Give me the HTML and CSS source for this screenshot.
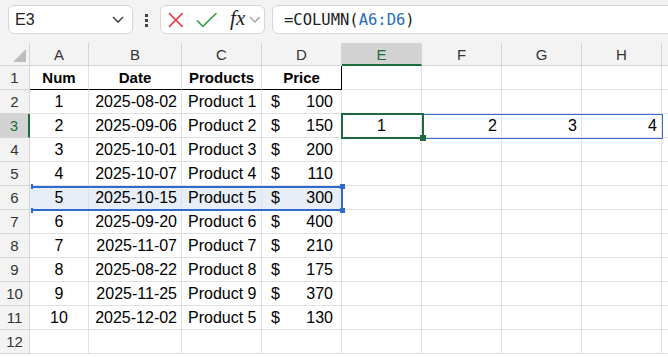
FILE: index.html
```html
<!DOCTYPE html>
<html lang="en">
<head>
    <meta charset="UTF-8">
    <title>Sheet</title>
    <link rel="stylesheet" href="styles.css">
</head>
<body>
    <!-- Formula bar -->
    <div class="toolbar">
        <div class="namebox">
            <span>E3</span>
            <svg class="chev" width="12" height="7" viewBox="0 0 12 7"><path d="M1 1l5 5 5-5" fill="none" stroke="#333" stroke-width="1.3"/></svg>
        </div>
        <div class="dots"><i></i><i></i><i></i></div>
        <div class="fxbox">
            <svg width="16" height="16" viewBox="0 0 16 16"><path d="M1 1l14 14M15 1L1 15" stroke="#e5484a" stroke-width="1.7" fill="none"/></svg>
            <svg class="check" width="22" height="16" viewBox="0 0 22 16"><path d="M1 8.5l6 6L21 1" stroke="#38a148" stroke-width="1.7" fill="none"/></svg>
            <span class="fx">fx</span>
            <svg width="12" height="7" viewBox="0 0 12 7"><path d="M1 1l5 5 5-5" fill="none" stroke="#9a9a9a" stroke-width="1.3"/></svg>
        </div>
        <div class="formula">=COLUMN(<span class="ref">A6:D6</span>)</div>
    </div>

    <!-- Grid -->
    <div class="sheet">
        <div class="row head">
            <div class="corner"></div>
            <div class="ch">A</div><div class="ch">B</div><div class="ch">C</div><div class="ch">D</div>
            <div class="ch cur">E</div><div class="ch">F</div><div class="ch">G</div><div class="ch">H</div><div class="ch"></div>
        </div>
        <div class="row">
            <div class="rh">1</div>
            <div class="c th">Num</div><div class="c th">Date</div><div class="c th">Products</div><div class="c th last">Price</div>
            <div class="c"></div><div class="c"></div><div class="c"></div><div class="c"></div><div class="c"></div>
        </div>
        <div class="row">
            <div class="rh">2</div>
            <div class="c ctr">1</div><div class="c rt">2025-08-02</div><div class="c lt">Product 1</div><div class="c acc"><span>$</span><span>100</span></div>
            <div class="c"></div><div class="c"></div><div class="c"></div><div class="c"></div><div class="c"></div>
        </div>
        <div class="row">
            <div class="rh cur">3</div>
            <div class="c ctr">2</div><div class="c rt">2025-09-06</div><div class="c lt">Product 2</div><div class="c acc"><span>$</span><span>150</span></div>
            <div class="c ctr">1</div><div class="c rt">2</div><div class="c rt">3</div><div class="c rt">4</div><div class="c"></div>
        </div>
        <div class="row">
            <div class="rh">4</div>
            <div class="c ctr">3</div><div class="c rt">2025-10-01</div><div class="c lt">Product 3</div><div class="c acc"><span>$</span><span>200</span></div>
            <div class="c"></div><div class="c"></div><div class="c"></div><div class="c"></div><div class="c"></div>
        </div>
        <div class="row">
            <div class="rh">5</div>
            <div class="c ctr">4</div><div class="c rt">2025-10-07</div><div class="c lt">Product 4</div><div class="c acc"><span>$</span><span>110</span></div>
            <div class="c"></div><div class="c"></div><div class="c"></div><div class="c"></div><div class="c"></div>
        </div>
        <div class="row picked">
            <div class="rh">6</div>
            <div class="c ctr">5</div><div class="c rt">2025-10-15</div><div class="c lt">Product 5</div><div class="c acc"><span>$</span><span>300</span></div>
            <div class="c"></div><div class="c"></div><div class="c"></div><div class="c"></div><div class="c"></div>
        </div>
        <div class="row">
            <div class="rh">7</div>
            <div class="c ctr">6</div><div class="c rt">2025-09-20</div><div class="c lt">Product 6</div><div class="c acc"><span>$</span><span>400</span></div>
            <div class="c"></div><div class="c"></div><div class="c"></div><div class="c"></div><div class="c"></div>
        </div>
        <div class="row">
            <div class="rh">8</div>
            <div class="c ctr">7</div><div class="c rt">2025-11-07</div><div class="c lt">Product 7</div><div class="c acc"><span>$</span><span>210</span></div>
            <div class="c"></div><div class="c"></div><div class="c"></div><div class="c"></div><div class="c"></div>
        </div>
        <div class="row">
            <div class="rh">9</div>
            <div class="c ctr">8</div><div class="c rt">2025-08-22</div><div class="c lt">Product 8</div><div class="c acc"><span>$</span><span>175</span></div>
            <div class="c"></div><div class="c"></div><div class="c"></div><div class="c"></div><div class="c"></div>
        </div>
        <div class="row">
            <div class="rh">10</div>
            <div class="c ctr">9</div><div class="c rt">2025-11-25</div><div class="c lt">Product 9</div><div class="c acc"><span>$</span><span>370</span></div>
            <div class="c"></div><div class="c"></div><div class="c"></div><div class="c"></div><div class="c"></div>
        </div>
        <div class="row">
            <div class="rh">11</div>
            <div class="c ctr">10</div><div class="c rt">2025-12-02</div><div class="c lt">Product 5</div><div class="c acc"><span>$</span><span>130</span></div>
            <div class="c"></div><div class="c"></div><div class="c"></div><div class="c"></div><div class="c"></div>
        </div>
        <div class="row">
            <div class="rh">12</div>
            <div class="c"></div><div class="c"></div><div class="c"></div><div class="c"></div>
            <div class="c"></div><div class="c"></div><div class="c"></div><div class="c"></div><div class="c"></div>
        </div>

        <!-- selections drawn over the grid -->
        <div class="range"></div>
        <div class="active"></div>
        <div class="fill-handle"></div>
        <div class="rowsel"></div>
        <div class="knob k1"></div>
        <div class="knob k2"></div>
        <div class="knob k3"></div>
        <div class="knob k4"></div>
    </div>
</body>
</html>
```

FILE: styles.css
```css
body {
    margin: 0;
    width: 668px;
    height: 357px;
    overflow: hidden;
    background: #fff;
    font-family: "Liberation Sans", Arial, sans-serif;
    color: #000;
}

/* formula bar */
.toolbar {
    display: flex;
    align-items: flex-start;
    height: 43px;
    box-sizing: border-box;
    padding: 5px 0 0 8px;
    background: #f3f3f3;
}

.namebox, .fxbox, .formula {
    height: 29px;
    box-sizing: border-box;
    background: #fff;
    border: 1px solid #d6d6d6;
    border-radius: 6px;
    display: flex;
    align-items: center;
}

.namebox {
    width: 125px;
    padding: 0 8px 0 6px;
    justify-content: space-between;
    font-size: 16px;
    color: #222;
}

.dots {
    width: 27px;
    display: flex;
    flex-direction: column;
    align-items: center;
    gap: 2px;
    padding-top: 9px;
}

.dots i {
    width: 3px;
    height: 3px;
    background: #444;
}

.fxbox {
    width: 105px;
    padding: 0 3px 0 7px;
}

.fxbox .check {
    margin-left: 12px;
}

.fx {
    font-family: "Liberation Serif", serif;
    font-style: italic;
    font-size: 21px;
    color: #222;
    margin: -3px 4px 0 13px;
}

.formula {
    flex: 1;
    margin: 0 -10px 0 7px;
    padding-left: 11px;
    font-family: "DejaVu Sans Mono", monospace;
    font-size: 15.5px;
    color: #222;
}

.ref {
    color: #2b6cc4;
}

/* grid */
.sheet {
    position: relative;
}

.row {
    display: grid;
    grid-template-columns: 30px 59px 93px 80px 80px 80px 80px 80px 80px 80px;
    height: 24px;
}

.row > div {
    box-sizing: border-box;
    border-right: 1px solid #e1e1e1;
    border-bottom: 1px solid #e1e1e1;
    line-height: 24px;
    font-size: 16px;
    white-space: nowrap;
    overflow: hidden;
}

.row.head {
    height: 23px;
    background: #f3f3f3;
}

.row.head > div {
    line-height: 24px;
    text-align: center;
    font-size: 15px;
    color: #333;
    border-right-color: #d5d5d5;
    border-bottom-color: #d5d5d5;
}

.corner {
    position: relative;
}

.corner::after {
    content: "";
    position: absolute;
    right: 3px;
    bottom: 3px;
    border-style: solid;
    border-width: 0 0 13px 13px;
    border-color: transparent transparent #bdbdbd transparent;
}

.row.head .cur {
    background: #d3d3d3;
    color: #1d6b3d;
    border-bottom: 2px solid #1d6b3d;
}

.row .rh {
    background: #f3f3f3;
    text-align: center;
    font-size: 15px;
    color: #333;
    border-right-color: #d5d5d5;
    border-bottom-color: #d5d5d5;
}

.row .rh.cur {
    background: #d3d3d3;
    color: #1d6b3d;
    border-right: 2px solid #1d6b3d;
}

.th {
    font-weight: bold;
    font-size: 15px !important;
    text-align: center;
    border-bottom-color: #000 !important;
}

.th.last {
    border-right-color: #000 !important;
}

.ctr {
    text-align: center;
}

.rt {
    text-align: right;
    padding-right: 4px;
}

.lt {
    padding-left: 6px;
}

.acc {
    display: flex;
    justify-content: space-between;
    padding: 0 8px 0 9px;
}

.picked .c:nth-child(-n+5) {
    background: #e8eef8;
}

/* selection outlines */
.range {
    position: absolute;
    left: 342px;
    top: 71px;
    width: 321px;
    height: 25px;
    box-sizing: border-box;
    border: 1px solid #3570cf;
}

.active {
    position: absolute;
    left: 341px;
    top: 70px;
    width: 83px;
    height: 26px;
    box-sizing: border-box;
    border: 2px solid #1d6b3d;
}

.fill-handle {
    position: absolute;
    left: 420px;
    top: 92px;
    width: 6px;
    height: 6px;
    background: #1d6b3d;
}

.rowsel {
    position: absolute;
    left: 31px;
    top: 143px;
    width: 312px;
    height: 25px;
    box-sizing: border-box;
    border: 2px solid #2f6bcb;
    border-left: none;
}

.knob {
    position: absolute;
    width: 5px;
    height: 5px;
    background: #2f6bcb;
}

.k1 { left: 340px; top: 141px; }
.k2 { left: 340px; top: 165px; }
.k3 { left: 31px; top: 141px; width: 2px; }
.k4 { left: 31px; top: 165px; width: 2px; }
```
